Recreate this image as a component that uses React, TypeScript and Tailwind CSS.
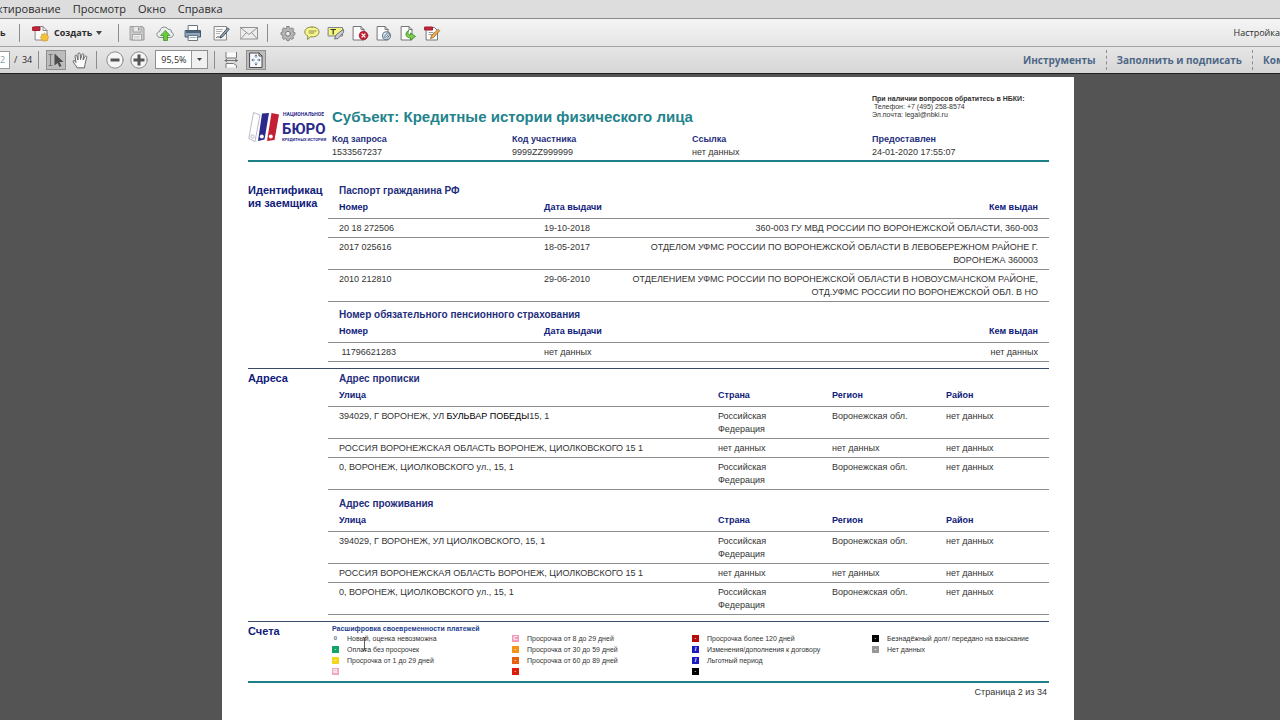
import type { ReactNode } from 'react';
import clsx from 'clsx';

type Cell = ReactNode;

const contacts = { phone: '+7 (495) 258-8574', mail: 'legal@nbki.ru' };

const requestInfo = [
    { label: 'Код запроса', value: '1533567237' },
    { label: 'Код участника', value: '9999ZZ999999' },
    { label: 'Ссылка', value: 'нет данных' },
    { label: 'Предоставлен', value: '24-01-2020 17:55:07' },
];

const documentColumns = ['Номер', 'Дата выдачи', 'Кем выдан'];
const addressColumns = ['Улица', 'Страна', 'Регион', 'Район'];

const passports: Cell[][] = [
    ['20 18 272506', '19-10-2018', '360-003 ГУ МВД РОССИИ ПО ВОРОНЕЖСКОЙ ОБЛАСТИ, 360-003'],
    ['2017 025616', '18-05-2017', <>ОТДЕЛОМ УФМС РОССИИ ПО ВОРОНЕЖСКОЙ ОБЛАСТИ В ЛЕВОБЕРЕЖНОМ РАЙОНЕ Г.<br />ВОРОНЕЖА 360003</>],
    ['2010 212810', '29-06-2010', <>ОТДЕЛЕНИЕМ УФМС РОССИИ ПО ВОРОНЕЖСКОЙ ОБЛАСТИ В НОВОУСМАНСКОМ РАЙОНЕ,<br />ОТД.УФМС РОССИИ ПО ВОРОНЕЖСКОЙ ОБЛ. В НО</>],
];

const pension: Cell[][] = [[<>&nbsp;11796621283</>, 'нет данных', 'нет данных']];

const country = <>Российская<br />Федерация</>;

const registered: Cell[][] = [
    [<>394029, Г ВОРОНЕЖ, УЛ <span className="text-black">БУЛЬВАР ПОБЕДЫ</span>15, 1</>, country, 'Воронежская обл.', 'нет данных'],
    ['РОССИЯ ВОРОНЕЖСКАЯ ОБЛАСТЬ ВОРОНЕЖ, ЦИОЛКОВСКОГО 15 1', 'нет данных', 'нет данных', 'нет данных'],
    ['0, ВОРОНЕЖ, ЦИОЛКОВСКОГО ул., 15, 1', country, 'Воронежская обл.', 'нет данных'],
];

const residence: Cell[][] = [
    ['394029, Г ВОРОНЕЖ, УЛ ЦИОЛКОВСКОГО, 15, 1', country, 'Воронежская обл.', 'нет данных'],
    ['РОССИЯ ВОРОНЕЖСКАЯ ОБЛАСТЬ ВОРОНЕЖ, ЦИОЛКОВСКОГО 15 1', 'нет данных', 'нет данных', 'нет данных'],
    ['0, ВОРОНЕЖ, ЦИОЛКОВСКОГО ул., 15, 1', country, 'Воронежская обл.', 'нет данных'],
];

type Mark = { swatch: string; sign: string; text?: string };

const legend: Mark[][] = [
    [
        { swatch: 'bg-white text-gray-500', sign: '0', text: 'Новый, оценка невозможна' },
        { swatch: 'bg-[#12a366] text-white', sign: '·', text: 'Оплата без просрочек' },
        { swatch: 'bg-[#f2d61c] text-white', sign: '-', text: 'Просрочка от 1 до 29 дней' },
        { swatch: 'bg-[#f2a5c4] text-white', sign: 'B' },
    ],
    [
        { swatch: 'bg-[#f29abb] text-white', sign: 'C', text: 'Просрочка от 8 до 29 дней' },
        { swatch: 'bg-[#f29418] text-white', sign: '·', text: 'Просрочка от 30 до 59 дней' },
        { swatch: 'bg-[#e8600f] text-white', sign: '·', text: 'Просрочка от 60 до 89 дней' },
        { swatch: 'bg-[#dd1c0c] text-white', sign: '·' },
    ],
    [
        { swatch: 'bg-[#b40a0a] text-white', sign: '·', text: 'Просрочка более 120 дней' },
        { swatch: 'bg-[#1a1ac0] text-white', sign: '/', text: 'Изменения/дополнения к договору' },
        { swatch: 'bg-[#1a1ac0] text-white', sign: '/', text: 'Льготный период' },
        { swatch: 'bg-black text-white', sign: '·' },
    ],
    [
        { swatch: 'bg-black text-white', sign: '·', text: 'Безнадёжный долг/ передано на взыскание' },
        { swatch: 'bg-[#969696] text-white', sign: '-', text: 'Нет данных' },
    ],
];

/* ---------- toolbar icons, 18x18 ---------- */

function Icon({ children }: { children: ReactNode }) {
    return (
        <svg width="18" height="18" viewBox="0 0 18 18" fill="none" strokeLinejoin="round" strokeLinecap="round">
            {children}
        </svg>
    );
}

const CreateIcon = () => (
    <Icon>
        <path d="M3.500 2.500h7.500l4 4v9.500h-11.500z" fill="#fafafa" stroke="#888" />
        <path d="M11 2.500v4h4" stroke="#888" />
        <path d="M1 3h7v3.500h-7z" fill="#c2263a" stroke="#a51b2e" />
        <path d="m12.500 9 1.200 1.400 1.800-.2.200 1.900 1.300 1.200-1.200 1.300v1.900l-1.900.1-1.300 1.100-1.400-1.200-1.800-.1v-1.800L8.300 13.300l1.200-1.200.1-1.900 1.700.1z" fill="#f3c13d" stroke="#c8923a" strokeWidth=".6" />
    </Icon>
);

const SaveIcon = () => (
    <Icon>
        <path d="M2.500 2.500h12l1.500 1.500v12h-13.500z" fill="#c9c9c9" stroke="#9a9a9a" />
        <path d="M5.500 2.500h7.500v5.500h-7.500z" fill="#e9e9e9" stroke="#a5a5a5" />
        <path d="M10 3.500h1.500v3H10z" fill="#8e8e8e" />
        <path d="M5 10.500h8.500v5.500H5z" fill="#f4f4f4" stroke="#a5a5a5" />
        <path d="M6.500 12.500h5M6.500 14h5" stroke="#bbb" strokeWidth=".7" />
    </Icon>
);

const CloudIcon = () => (
    <Icon>
        <path d="M4.500 13.500C-.5 13.500 0 8 3.700 7.600 4 3 9.700 1.300 12 5.300c2.700-.3 3.600 1.300 3.300 2.900 3.200 1 2.800 5.300-1.300 5.300z" fill="#eef1f2" stroke="#7d868c" />
        <path d="m9.500 6.500 4.500 5h-2.500v5h-4v-5H5z" fill="#6fc93c" stroke="#3e952a" strokeWidth=".8" />
    </Icon>
);

const PrintIcon = () => (
    <Icon>
        <path d="M4.500 1.500h9v6h-9z" fill="#fff" stroke="#6c7782" />
        <path d="M1.500 6.500h15v6.500h-15z" fill="#8ea6bf" stroke="#44586c" />
        <path d="M2 7h14v2H2z" fill="#4d637a" />
        <path d="M4.500 11.500h9v5h-9z" fill="#f7fafc" stroke="#6c7782" />
        <path d="M6 13.500h6" stroke="#9fb4c8" />
    </Icon>
);

const SignIcon = () => (
    <Icon>
        <path d="M2.500 2.500h12v13.500H2.500z" fill="#fafafa" stroke="#888" />
        <path d="M4.500 5.500h6M4.500 7.500h5M4.500 9.500h3" stroke="#999" strokeWidth=".8" />
        <path d="M4.500 13.500c2-2 2 1 4-1" stroke="#444" />
        <path d="M15.500 4 9 11.500l-1 2.500 2.500-1L17 5.500z" fill="#90a4b5" stroke="#3d4a55" strokeWidth=".9" />
    </Icon>
);

const MailIcon = () => (
    <Icon>
        <path d="M.5 3.500h17v11.500H.5z" fill="#ededed" stroke="#929292" />
        <path d="m1 4 8 6.500L17 4M1 14.500l5.500-6M17 14.500l-5.500-6" stroke="#929292" />
    </Icon>
);

const GearIcon = () => (
    <Icon>
        <path d="M7.900 2.500h2.200l.4 1.700 1.300.6 1.500-1 1.500 1.600-.9 1.500.5 1.200 1.500.4v2.200l-1.500.5-.5 1.200.8 1.400-1.500 1.600-1.500-.8-1.200.5-.4 1.500H7.900l-.4-1.500-1.300-.5-1.400.8-1.600-1.600.8-1.400-.5-1.200-1.500-.5V8.500L3.500 8.100 4 6.900l-.8-1.500 1.600-1.600 1.400 1 1.300-.6z" fill="#b5b5b5" stroke="#7a7a7a" strokeWidth=".9" />
        <circle cx="9" cy="9.700" r="2.400" fill="#eee" stroke="#7a7a7a" />
    </Icon>
);

const CommentIcon = () => (
    <Icon>
        <path d="M9 3c4.500 0 7 2 7 4.900s-2.600 5-7 5l-1.400-.1L4.500 15.500l.5-3.400C3 11.200 1.800 9.900 1.800 7.900 1.800 5 4.500 3 9 3z" fill="#f7f58c" stroke="#8a8a4c" />
        <path d="M6 7h7M6 9h5" stroke="#8a8a4c" />
    </Icon>
);

const HighlightIcon = () => (
    <Icon>
        <path d="M1.500 3.500h14v8.500h-14z" fill="#f6f37a" stroke="#7c8490" />
        <path d="M4 5.500h4.500M6.200 5.500v4.500" stroke="#333" strokeWidth="1.200" />
        <path d="m16 5.500-7 5.500-1.500 4 3.500-.5 5.500-6z" fill="#c8ccd2" stroke="#6d737c" />
    </Icon>
);

const DeletePageIcon = () => (
    <Icon>
        <path d="M2.500 2.500h7.500l3 3v10.500h-10.500z" fill="#fcfcfc" stroke="#777" />
        <path d="M10 2.500v3h3" stroke="#777" />
        <circle cx="12.500" cy="11.500" r="4.300" fill="#c41f35" stroke="#8f1526" strokeWidth=".7" />
        <path d="m11 10 3 3m0-3-3 3" stroke="#fff" strokeWidth="1.200" />
    </Icon>
);

const AttachIcon = () => (
    <Icon>
        <path d="M2.500 2.500h7.500l3 3v10.500h-10.500z" fill="#fcfcfc" stroke="#777" />
        <path d="M10 2.500v3h3" stroke="#777" />
        <circle cx="11.500" cy="11.800" r="4" fill="#dfe8f0" stroke="#60788f" strokeWidth="1.100" />
        <path d="m13 10.800-2 2.500a.9.900 0 0 1-1.400-1.200l2.200-2.700a1.600 1.600 0 0 1 2.500 2l-2 2.800" stroke="#60788f" />
    </Icon>
);

const ExportIcon = () => (
    <Icon>
        <path d="M2.500 2.500h7.500l3 3v10.500h-10.500z" fill="#fcfcfc" stroke="#777" />
        <path d="M10 2.500v3h3" stroke="#777" />
        <path d="M9.500 6.500C6 8 5.500 13.500 11.500 14v2l5-3.500-5-3.500v2c-2.500 0-3-2-2-4.500z" fill="#7fce4c" stroke="#3f8d2c" strokeWidth=".9" />
    </Icon>
);

const EditPdfIcon = () => (
    <Icon>
        <path d="M3.500 3.500h8l3 3v9.500h-11z" fill="#fcfcfc" stroke="#777" />
        <path d="M2 3h7.500v3H2z" fill="#c2263a" stroke="#a51b2e" />
        <path d="M6 8.500h4M6 10.500h3" stroke="#999" />
        <path d="m15 5.500-6.500 6-1 3 3-1 6-6.500z" fill="#f0b24a" stroke="#8f5b2a" strokeWidth=".8" />
    </Icon>
);

const SelectToolIcon = () => (
    <Icon>
        <path d="M2 3.500h3M3.500 3.500v11M2 14.500h3" stroke="#777" />
        <path d="M7.500 2.500v12l3-2.500 2 4 2-1-2-4h4z" fill="#4b4b4b" />
    </Icon>
);

const HandIcon = () => (
    <Icon>
        <path d="M6 16.500c-1-2.500-3.500-4-4-6.500 1-1 2 0 3 1.500L4 5c.5-1.500 2-1 2 .3L7 9V3c.3-1.500 2-1.500 2.200 0L9.500 8.500 11 3.500c.5-1.300 2-.8 1.800.6L12 9l2-3.500c.8-1 2-.4 1.700.8C15 9.500 14 12 13.500 16.500z" fill="#fbfbfb" stroke="#666" />
    </Icon>
);

const ZoomOutIcon = () => (
    <Icon>
        <circle cx="9" cy="9" r="8.200" fill="#f5f5f5" stroke="#8a8a8a" />
        <path d="M4.500 7.500h9v3h-9z" fill="#555" />
    </Icon>
);

const ZoomInIcon = () => (
    <Icon>
        <circle cx="9" cy="9" r="8.200" fill="#f5f5f5" stroke="#8a8a8a" />
        <path d="M7.500 3.500h3v4h4v3h-4v4h-3v-4h-4v-3h4z" fill="#555" />
    </Icon>
);

const FitWidthIcon = () => (
    <Icon>
        <path d="M4 1.500v5.500h10.500v-5.500M4 16.500v-4h7.500l3 2v2" fill="#fafafa" stroke="#777" />
        <path d="M3 9.500h12.500M5 8.300 3 9.500l2 1.200M13.500 8.300l2 1.200-2 1.200" stroke="#666" strokeWidth=".9" />
    </Icon>
);

const FitPageIcon = () => (
    <Icon>
        <path d="M3 2h9l3 3v11.500H3z" fill="#f6f9fc" stroke="#4a4a4a" />
        <path d="M12 2v3h3" stroke="#4a4a4a" />
        <path d="M9 4v2.500M9 11.500V14M5 9h2.500M10.500 9H13M8 5l1-1 1 1M8 13l1 1 1-1M6 8 5 9l1 1M12 8l1 1-1 1" stroke="#5a7391" strokeWidth=".9" />
    </Icon>
);

/* ---------- viewer chrome ---------- */

function Separator() {
    return <span className="h-[18px] w-px shrink-0 bg-[#8d8d8d]" />;
}

function ToolButton({ label, className, pressed, children }: { label: string; className: string; pressed?: boolean; children: ReactNode }) {
    return (
        <button
            type="button"
            aria-label={label}
            className={clsx('flex h-5 shrink-0 items-center justify-center', pressed && 'border border-[#8f8f8f] bg-[#bcbcbc]', className)}
        >
            {children}
        </button>
    );
}

function MenuBar() {
    return (
        <nav className="-ml-[3px] flex h-[18px] items-center gap-3 bg-[#dddddd] text-[11px] leading-4 text-[#2b2b2b]">
            <a href="#edit">ктирование</a>
            <a href="#view">Просмотр</a>
            <a href="#window">Окно</a>
            <a href="#help">Справка</a>
        </nav>
    );
}

function MainToolbar() {
    return (
        <div className="flex h-7 items-center overflow-hidden border-t border-[#8a8a8a] bg-linear-to-b from-[#f4f4f4] to-[#e6e6e6] text-[#2b2b2b]">
            <button type="button" className="mr-3 w-[7px] text-left text-[9px] font-bold">ь</button>
            <Separator />
            <button type="button" className="mr-4 ml-3 flex items-center gap-1 text-[9px] font-bold">
                <CreateIcon />
                Создать
                <svg width="6" height="4" viewBox="0 0 6 4"><path d="M0 0h6L3 4z" fill="#444" /></svg>
            </button>
            <Separator />
            <div className="mx-1 flex">
                <ToolButton label="Сохранить" className="w-7"><SaveIcon /></ToolButton>
                <ToolButton label="Отправить в облако" className="w-7"><CloudIcon /></ToolButton>
                <ToolButton label="Печать" className="w-7"><PrintIcon /></ToolButton>
                <ToolButton label="Подписать" className="w-7"><SignIcon /></ToolButton>
                <ToolButton label="Почта" className="w-7"><MailIcon /></ToolButton>
            </div>
            <Separator />
            <div className="ml-2 flex">
                <ToolButton label="Параметры" className="w-6"><GearIcon /></ToolButton>
                <ToolButton label="Комментарий" className="w-6"><CommentIcon /></ToolButton>
                <ToolButton label="Выделить текст" className="w-6"><HighlightIcon /></ToolButton>
                <ToolButton label="Удалить страницы" className="w-6"><DeletePageIcon /></ToolButton>
                <ToolButton label="Вложить файл" className="w-6"><AttachIcon /></ToolButton>
                <ToolButton label="Извлечь страницы" className="w-6"><ExportIcon /></ToolButton>
                <ToolButton label="Редактировать PDF" className="w-6"><EditPdfIcon /></ToolButton>
            </div>
            <button type="button" className="ml-auto text-[9px]">Настройка</button>
        </div>
    );
}

function PageToolbar() {
    return (
        <div className="flex h-7 items-center overflow-hidden border-t border-b border-t-[#a3a3a3] border-b-[#1f1f1f] bg-linear-to-b from-[#e6e6e6] to-[#d6d6d6] pb-px text-[9px] text-[#2b2b2b]">
            <input aria-label="Страница" defaultValue="2" className="h-[18px] w-2.5 border border-l-0 border-[#999] bg-white text-[#7fa0a8]" />
            <span className="mr-1.5 ml-1">/&nbsp; 34</span>
            <Separator />
            <ToolButton label="Выделение" className="ml-[7px] w-5" pressed><SelectToolIcon /></ToolButton>
            <ToolButton label="Рука" className="mr-1 ml-0.5 w-6"><HandIcon /></ToolButton>
            <Separator />
            <ToolButton label="Уменьшить" className="ml-1.5 w-6"><ZoomOutIcon /></ToolButton>
            <ToolButton label="Увеличить" className="mr-1 w-6"><ZoomInIcon /></ToolButton>
            <div className="relative mr-1.5">
                <select aria-label="Масштаб" className="h-[19px] w-[53px] appearance-none border border-[#8f8f8f] bg-white pl-[5px]">
                    <option>95,5%</option>
                </select>
                <span className="pointer-events-none absolute inset-y-px right-px flex w-4 items-center justify-center border-l border-[#999] bg-[#f0f0f0]">
                    <svg width="5" height="3" viewBox="0 0 5 3"><path d="M0 0h5L2.500 3z" fill="#444" /></svg>
                </span>
            </div>
            <Separator />
            <ToolButton label="По ширине" className="mr-[3px] ml-1 w-6"><FitWidthIcon /></ToolButton>
            <ToolButton label="По странице" className="w-5" pressed><FitPageIcon /></ToolButton>
            <div className="ml-auto flex h-5 items-center text-[10px] leading-5 font-bold text-[#4d6787]">
                <button type="button" className="pr-2.5">Инструменты</button>
                <button type="button" className="border-l border-dashed border-[#8d8d8d] px-2.5">Заполнить и подписать</button>
                <button type="button" className="w-7 overflow-hidden border-l border-dashed border-[#8d8d8d] pl-2.5 text-left">Ком</button>
            </div>
        </div>
    );
}

/* ---------- report ---------- */

function Logo() {
    return (
        <svg width="80" height="34" viewBox="0 0 80 34" role="img" aria-label="Национальное бюро кредитных историй">
            <path d="M5.500 2.500 12 5 7 31.500.8 28.500z" fill="#fff" stroke="#a9a9bb" strokeWidth=".8" />
            <circle cx="4.500" cy="26.500" r="1.700" fill="#fff" stroke="#a9a9bb" strokeWidth=".8" />
            <path d="M14 3.500 21 3 16.500 29.500l-6.500 1.500z" fill="#2b2a8c" />
            <circle cx="13.800" cy="26.500" r="2" fill="#fff" />
            <path d="M23.500 3 31 4.500 26.500 30l-7.500 1z" fill="#c41f33" />
            <circle cx="22.800" cy="26.500" r="2" fill="#fff" />
            <g fill="#2b2a8c" fontFamily="Roboto, Liberation Sans, sans-serif" fontWeight="700">
                <text x="35" y="6" fontSize="5">НАЦИОНАЛЬНОЕ</text>
                <text x="34" y="24" fontSize="15">БЮРО</text>
                <text x="34" y="31" fontSize="4">КРЕДИТНЫХ ИСТОРИЙ</text>
            </g>
        </svg>
    );
}

function ReportHeader() {
    return (
        <header className="flex items-end border-b-2 border-[#1d7f87] pb-px">
            <div className="mr-1 w-20 shrink-0 pb-[15px]"><Logo /></div>
            <div className="grid flex-1 grid-cols-[180px_180px_180px_1fr]">
                <h1 className="col-span-3 self-end text-[15px] leading-4 font-bold text-[#23838c]">Субъект: Кредитные истории физического лица</h1>
                <address className="mb-1.5 text-[7px] leading-2 not-italic">
                    <b>При наличии вопросов обратитесь в НБКИ:</b><br />
                    &nbsp;Телефон: {contacts.phone}<br />
                    Эл.почта: {contacts.mail}
                </address>
                {requestInfo.map((item) => (
                    <dl key={item.label} className="mt-2 leading-[13px]">
                        <dt className="font-bold text-[#1f2f7d]">{item.label}</dt>
                        <dd>{item.value}</dd>
                    </dl>
                ))}
            </div>
        </header>
    );
}

function Section({ title, className, children }: { title: ReactNode; className?: string; children: ReactNode }) {
    return (
        <section className={clsx('flex', className)}>
            <h2 className="w-20 shrink-0 text-[11px] leading-[13px] font-bold text-[#10207a]">{title}</h2>
            <div className="flex min-w-0 flex-1 flex-col">{children}</div>
        </section>
    );
}

function DataTable({ title, columns, widths, rows, lastRight }: { title: string; columns: string[]; widths: string[]; rows: Cell[][]; lastRight?: boolean }) {
    const align = (i: number) => (lastRight && i === columns.length - 1 ? 'text-right' : 'text-left');

    return (
        <table className="w-full table-fixed border-separate border-spacing-0">
            <caption className="mb-1 pl-[11px] text-left text-[10px] leading-[13px] font-bold text-[#1f2f7d]">{title}</caption>
            <thead>
                <tr>
                    {columns.map((name, i) => (
                        <th key={name} className={clsx('border-b border-[#8c8c8c] px-[11px] pb-1 font-bold text-[#10207a]', widths[i], align(i))}>{name}</th>
                    ))}
                </tr>
            </thead>
            <tbody>
                {rows.map((row, r) => (
                    <tr key={r}>
                        {row.map((cell, i) => (
                            <td key={i} className={clsx('border-b border-[#8c8c8c] px-[11px] pt-[3px] pb-0.5 align-top whitespace-nowrap', align(i))}>{cell}</td>
                        ))}
                    </tr>
                ))}
            </tbody>
        </table>
    );
}

const documentWidths = ['w-[205px]', 'w-[82px]', 'w-auto'];
const addressWidths = ['w-auto', 'w-[114px]', 'w-[114px]', 'w-[114px]'];

function TextCursor() {
    return (
        <svg width="5" height="14" viewBox="0 0 5 14" className="absolute top-1 left-[30px]">
            <path d="M.5.5h1.500l.5.500.5-.500h1.500M2.500 1v12M.5 13.500h1.500l.5-.500.5.500h1.500" stroke="#333" fill="none" strokeWidth=".8" />
        </svg>
    );
}

function Legend() {
    return (
        <div className="pl-1">
            <h3 className="text-[7px] leading-2 font-bold text-[#1f3f8d]">Расшифровка своевременности платежей</h3>
            <div className="grid grid-cols-[180px_180px_180px_1fr] text-[7px] leading-[11px]">
                {legend.map((marks, c) => (
                    <ul key={c}>
                        {marks.map((mark, i) => (
                            <li key={i} className="relative flex h-[11px] items-center gap-2 whitespace-nowrap">
                                <span className={clsx('flex size-[7px] shrink-0 items-center justify-center text-[6px] leading-[7px] font-bold', mark.swatch)}>{mark.sign}</span>
                                {mark.text}
                                {c === 0 && i === 0 && <TextCursor />}
                            </li>
                        ))}
                    </ul>
                ))}
            </div>
        </div>
    );
}

export default function App() {
    return (
        <div className="flex min-h-screen flex-col overflow-x-hidden bg-[#545454] font-['Open_Sans','Noto_Sans',sans-serif]">
            <MenuBar />
            <MainToolbar />
            <PageToolbar />
            <main className="flex flex-1 justify-center pt-[3px] pl-4">
                <article className="w-full max-w-[852px] bg-white px-[25px] pt-[18px] pb-6 pl-[26px] font-['Liberation_Sans',Arial,sans-serif] text-[9px] leading-[13px] text-[#333]">
                    <ReportHeader />
                    <Section className="mt-[22px]" title={<>Идентификац<br />ия заемщика</>}>
                        <DataTable title="Паспорт гражданина РФ" columns={documentColumns} widths={documentWidths} rows={passports} lastRight />
                        <div className="pt-1.5">
                            <DataTable title="Номер обязательного пенсионного страхования" columns={documentColumns} widths={documentWidths} rows={pension} lastRight />
                        </div>
                    </Section>
                    <Section className="mt-1.5 border-t border-[#3b4a6b] pt-[3px]" title="Адреса">
                        <DataTable title="Адрес прописки" columns={addressColumns} widths={addressWidths} rows={registered} />
                        <div className="pt-[7px]">
                            <DataTable title="Адрес проживания" columns={addressColumns} widths={addressWidths} rows={residence} />
                        </div>
                    </Section>
                    <Section className="mt-1.5 border-t border-[#3b4a6b] pt-[3px] pb-1" title="Счета">
                        <Legend />
                    </Section>
                    <footer className="border-t-2 border-[#1d7f87] pt-[3px] pr-0.5 text-right">Страница 2 из 34</footer>
                </article>
            </main>
        </div>
    );
}
